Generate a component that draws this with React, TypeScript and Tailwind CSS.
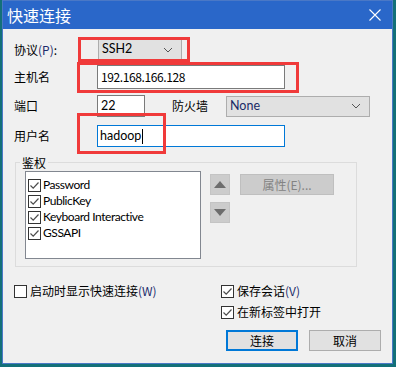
import type { ReactNode } from 'react';

const cjk = { fontFamily: '"Noto Sans CJK SC", "Noto Sans", sans-serif' };
const latin = { fontFamily: 'Lato, "Noto Sans CJK SC", sans-serif' };

const CheckBox = ({ checked }: { checked: boolean }) => (
  <span className="flex h-[13px] w-[13px] shrink-0 items-center justify-center border border-[#333333] bg-white">
    {checked && (
      <svg width="11" height="11" viewBox="0 0 11 11" aria-hidden="true">
        <path d="M1.5 5.5 L4.2 8.2 L9.5 2.5" fill="none" stroke="#4d4d4d" strokeWidth="1.2" />
      </svg>
    )}
  </span>
);

const Chevron = () => (
  <svg width="10" height="6" viewBox="0 0 10 6" aria-hidden="true">
    <path d="M1 1 L5 5 L9 1" fill="none" stroke="#555555" strokeWidth="1" />
  </svg>
);

const Combo = ({ value, className }: { value: string; className: string }) => (
  <div
    className={`flex h-[21px] items-center justify-between border border-[#adadad] bg-[#e1e1e1] pl-[3px] pr-[8px] text-[12.5px] ${className}`}
    style={latin}
  >
    <span>{value}</span>
    <Chevron />
  </div>
);

const Label = ({ children, w }: { children: ReactNode; w: string }) => (
  <span className={`shrink-0 text-[12px] text-black ${w}`} style={cjk}>
    {children}
  </span>
);

const Mn = ({ children }: { children: ReactNode }) => <span className="text-[#1c2c6c]">{children}</span>;

const authItems = ['Password', 'PublicKey', 'Keyboard Interactive', 'GSSAPI'];

export default function App() {
  return (
    <div className="h-[367px] w-[396px] overflow-hidden bg-[#137079]">
      <div className="relative ml-[2px] flex h-[364px] w-[391px] flex-col border border-[#4a78c6] bg-[#f0f0f0]">
        {/* title bar */}
        <div className="flex h-[28px] shrink-0 items-center justify-between bg-[#2a67c9] pl-[4px] pr-[11px]">
          <span className="text-[16px] leading-none text-white" style={cjk}>
            快速连接
          </span>
          <svg width="12" height="12" viewBox="0 0 12 12" aria-hidden="true">
            <path d="M0.5 0.5 L11.5 11.5 M11.5 0.5 L0.5 11.5" stroke="white" strokeWidth="1.1" />
          </svg>
        </div>

        <div className="flex flex-col pl-[11px]">
          <div className="mt-[10px] flex h-[21px] items-center">
            <Label w="w-[84px]">
              协议<Mn>(P)</Mn>:
            </Label>
            <Combo value="SSH2" className="w-[84px] text-black" />
          </div>

          <div className="mt-[5px] flex h-[24px] items-center">
            <Label w="w-[83px]">主机名</Label>
            <div
              className="flex h-[24px] w-[188px] items-center border border-[#7a7a7a] bg-white pl-[3px] text-[12px] tracking-[-0.4px] text-black"
              style={cjk}
            >
              192.168.166.128
            </div>
          </div>

          <div className="mt-[6px] flex h-[22px] items-center">
            <Label w="w-[83px]">端口</Label>
            <div className="flex h-[22px] w-[48px] items-center border border-[#7a7a7a] bg-white pl-[3px] text-[12.5px] text-black" style={latin}>
              22
            </div>
            <Label w="ml-[27px] w-[54px]">防火墙</Label>
            <Combo value="None" className="w-[144px] text-[#1a2a66]" />
          </div>

          <div className="mt-[8px] flex h-[22px] items-center">
            <Label w="w-[83px]">用户名</Label>
            <div className="flex h-[22px] w-[188px] items-center border border-[#0078d7] bg-white pl-[2px] text-[12.5px] text-black" style={latin}>
              hadoop
              <span className="ml-[1px] h-[15px] w-px bg-black" />
            </div>
          </div>

          {/* auth group */}
          <fieldset className="mt-[7px] ml-px h-[113px] w-[342px] border border-[#dcdcdc] pl-[4px]">
            <legend className="px-[2px] text-[12px] leading-[17px] text-black" style={cjk}>
              鉴权
            </legend>
            <div className="flex items-start">
              <div className="ml-[5px] h-[88px] w-[176px] border border-[#828790] bg-white pl-[2px] pt-[5px]">
                {authItems.map((item) => (
                  <div
                    key={item}
                    className="flex h-[16px] items-center gap-[2px] text-[12px] tracking-[-0.45px] text-black"
                    style={latin}
                  >
                    <CheckBox checked />
                    <span>{item}</span>
                  </div>
                ))}
              </div>
              <div className="ml-[9px] mt-[3px] flex flex-col gap-[7px]">
                <div className="flex h-[21px] w-[20px] items-center justify-center border border-[#c4c4c4] bg-[#cccccc]">
                  <svg width="12" height="7" viewBox="0 0 12 7" aria-hidden="true">
                    <path d="M6 0 L12 7 L0 7 Z" fill="#6d6d6d" />
                  </svg>
                </div>
                <div className="flex h-[21px] w-[20px] items-center justify-center border border-[#c4c4c4] bg-[#cccccc]">
                  <svg width="12" height="7" viewBox="0 0 12 7" aria-hidden="true">
                    <path d="M0 0 L12 0 L6 7 Z" fill="#6d6d6d" />
                  </svg>
                </div>
              </div>
              <div
                className="ml-[10px] mt-[3px] flex h-[21px] w-[94px] items-center justify-center border border-[#bfbfbf] bg-[#cccccc] text-[12px] text-[#838383]"
                style={cjk}
              >
                属性(E)...
              </div>
            </div>
          </fieldset>

          {/* options */}
          <div className="mt-[17px] flex">
            <div className="flex h-[14px] w-[207px] items-center gap-[3px] text-[12px] text-black" style={cjk}>
              <CheckBox checked={false} />
              <span>
                启动时显示快速连接<Mn>(W)</Mn>
              </span>
            </div>
            <div className="flex flex-col gap-[7px]">
              <div className="flex h-[14px] items-center gap-[3px] text-[12px] text-black" style={cjk}>
                <CheckBox checked />
                <span>
                  保存会话<Mn>(V)</Mn>
                </span>
              </div>
              <div className="flex h-[14px] items-center gap-[3px] text-[12px] text-black" style={cjk}>
                <CheckBox checked />
                <span>在新标签中打开</span>
              </div>
            </div>
          </div>

          <div className="mt-[11px] flex justify-end gap-[11px] pr-[11px]">
            <button className="h-[21px] w-[72px] border-2 border-[#0078d7] bg-[#e1e1e1] text-[12px] text-black" style={cjk}>
              连接
            </button>
            <button className="h-[21px] w-[72px] border border-[#adadad] bg-[#e1e1e1] text-[12px] text-black" style={cjk}>
              取消
            </button>
          </div>
        </div>

        {/* red annotation boxes */}
        <div className="pointer-events-none absolute left-[75px] top-[36px] h-[25px] w-[112px] border-[3px] border-[#f03a3a]" />
        <div className="pointer-events-none absolute left-[74px] top-[61px] h-[31px] w-[222px] border-[3px] border-[#f03a3a]" />
        <div className="pointer-events-none absolute left-[74px] top-[112px] h-[41px] w-[89px] border-[3px] border-[#f03a3a]" />
      </div>
    </div>
  );
}
